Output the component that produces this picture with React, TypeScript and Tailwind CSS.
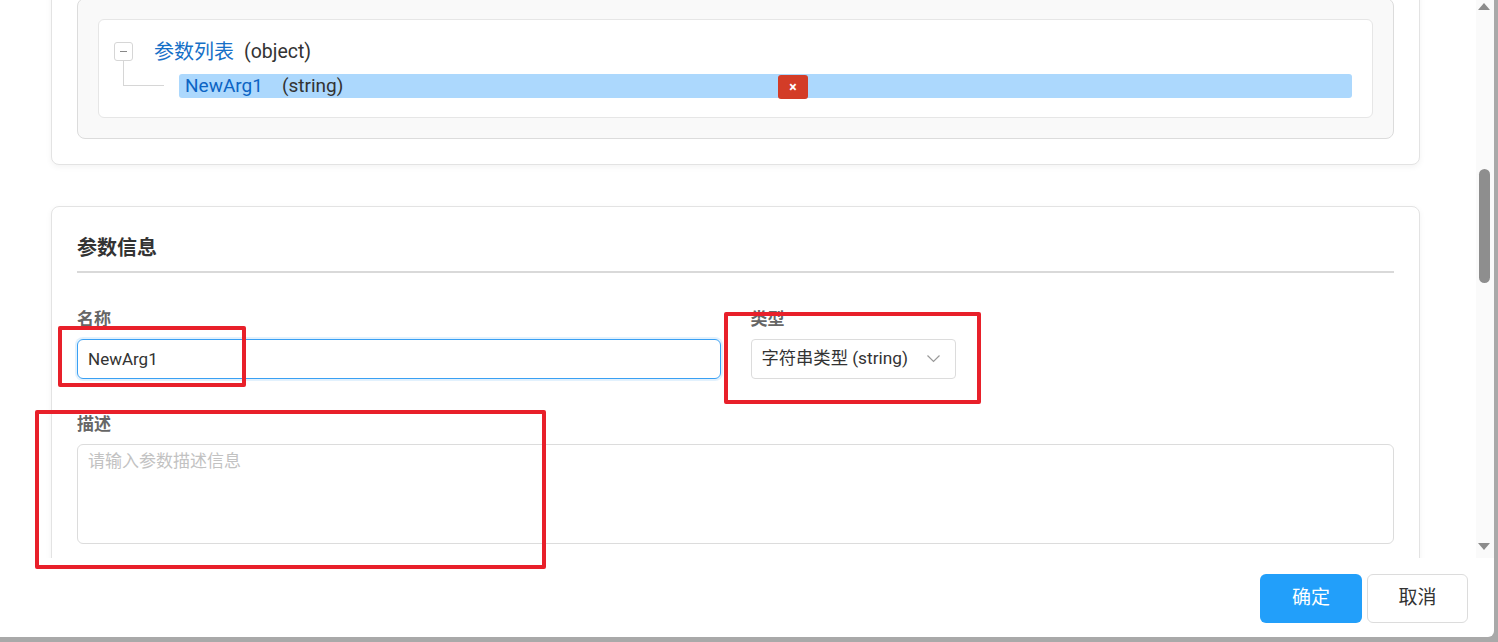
import React from 'react';

const font = "font-['Roboto','Noto_Sans_CJK_SC',sans-serif]";

function TreePanel() {
  return (
    <div className="rounded-[8px] border border-[#e3e3e3] bg-white px-[25px] pt-[25px] pb-[25px] shadow-[0_2px_6px_rgba(0,0,0,0.05)]">
      <div className="rounded-[8px] border border-[#dcdcdc] bg-[#f9f9f9] p-5">
        <div className="rounded-[6px] border border-[#e6e6e6] bg-white pl-[15px] pr-[20px] pt-[22px] pb-[19px]">
          <div className="relative">
            <div className="flex h-[19px] items-center">
              <div className="flex h-[19px] w-[19px] items-center justify-center rounded-[3px] border border-[#d6d6d6] bg-white">
                <span className="block h-px w-[7px] bg-[#888]" />
              </div>
              <span className="ml-[21px] text-[20px] leading-[24px] text-[#1670c7]">参数列表</span>
              <span className="ml-[10px] text-[19.5px] leading-[24px] text-[#333]">(object)</span>
            </div>
            {/* connector */}
            <div className="absolute left-[9px] top-[19px] h-[25px] w-[41px] border-b border-l border-[#d6d6d6]" />
            <div className="relative ml-[65px] mt-[13px] flex h-[24px] items-center rounded-[3px] bg-[#acd8fd] pl-[6px]">
              <span className="text-[19px] leading-[24px] text-[#0d64c4]">NewArg1</span>
              <span className="ml-[19px] text-[19px] leading-[24px] text-[#333]">(string)</span>
              <button className="absolute left-[599px] top-[1px] flex h-[24px] w-[30px] items-center justify-center rounded-[3px] bg-[#d33c27] text-[14px] font-bold leading-none text-white">
                ×
              </button>
            </div>
          </div>
        </div>
      </div>
    </div>
  );
}

function InfoPanel() {
  return (
    <div className="mt-[41px] rounded-[8px] border border-[#e3e3e3] bg-white px-[25px] pt-[28px] pb-[30px] shadow-[0_2px_6px_rgba(0,0,0,0.05)]">
      <div className="border-b-2 border-[#d9d9d9] pb-[10px] text-[20px] font-bold leading-[26px] text-[#333]">参数信息</div>
      <div className="mt-[35px] grid grid-cols-2 gap-[30px]">
        <div>
          <div className="mb-[9px] text-[17px] font-bold leading-[22px] text-[#666]">名称</div>
          <input
            defaultValue="NewArg1"
            className="h-[40px] w-full rounded-[6px] border border-[#3aa0f3] px-[10px] text-[17px] text-[#333] shadow-[0_0_0_2px_rgba(58,160,243,0.15)] outline-none"
          />
        </div>
        <div>
          <div className="mb-[9px] text-[17px] font-bold leading-[22px] text-[#666]">类型</div>
          <div className="inline-flex h-[40px] items-center rounded-[4px] border border-[#dcdcdc] pl-[10px] pr-[15px] text-[17.3px] text-[#333]">
            <span>字符串类型 (string)</span>
            <svg className="ml-[19px]" width="13" height="8" viewBox="0 0 13 8" fill="none">
              <polyline points="0.5,0.5 6.5,6.5 12.5,0.5" stroke="#999" strokeWidth="1.2" />
            </svg>
          </div>
        </div>
      </div>
      <div className="mt-[34px] mb-[9px] text-[17px] font-bold leading-[22px] text-[#666]">描述</div>
      <textarea
        placeholder="请输入参数描述信息"
        className="block h-[100px] w-full resize-none rounded-[6px] border border-[#dcdcdc] px-[10px] py-[5px] text-[17px] leading-[22px] text-[#333] outline-none placeholder:text-[#c2c2c2]"
      />
    </div>
  );
}

function Scrollbar() {
  return (
    <div className="relative w-[18px] bg-[#fafafa]">
      <div className="absolute left-[2px] top-[3px] h-0 w-0 border-x-[6.5px] border-b-[7px] border-x-transparent border-b-[#8c8c8c]" />
      <div className="absolute left-[3px] top-[169px] h-[114px] w-[11px] rounded-full bg-[#8e8e8e]" />
      <div className="absolute bottom-[8px] left-[2px] h-0 w-0 border-x-[6.5px] border-t-[7px] border-x-transparent border-t-[#8c8c8c]" />
    </div>
  );
}

export default function App() {
  return (
    <div className={`h-screen w-full bg-[#a9a9a9] pr-[4px] pb-[5px] ${font}`}>
      <div className="relative flex h-full flex-col overflow-hidden rounded-br-[6px] bg-white">
        <div className="flex h-[558px] shrink-0">
          <div className="flex-1 overflow-hidden">
            <div className="-mt-[28px] pl-[51px] pr-[56px]">
              <TreePanel />
              <InfoPanel />
            </div>
          </div>
          <Scrollbar />
        </div>
        <div className="flex flex-1 items-start justify-end gap-[5px] pt-[16px] pr-[26px]">
          <button className="h-[49px] w-[102px] rounded-[6px] bg-[#229ffa] text-[19px] text-white">确定</button>
          <button className="h-[49px] w-[101px] rounded-[6px] border border-[#dcdcdc] bg-white text-[19px] text-[#333]">取消</button>
        </div>

        {/* red annotation boxes */}
        <div className="pointer-events-none absolute left-[58px] top-[326px] h-[61px] w-[188px] rounded-[2px] border-[4px] border-[#e8202a]" />
        <div className="pointer-events-none absolute left-[724px] top-[312px] h-[92px] w-[257px] rounded-[2px] border-[4px] border-[#e8202a]" />
        <div className="pointer-events-none absolute left-[35px] top-[410px] h-[159px] w-[511px] rounded-[2px] border-[4px] border-[#e8202a]" />
      </div>
    </div>
  );
}
